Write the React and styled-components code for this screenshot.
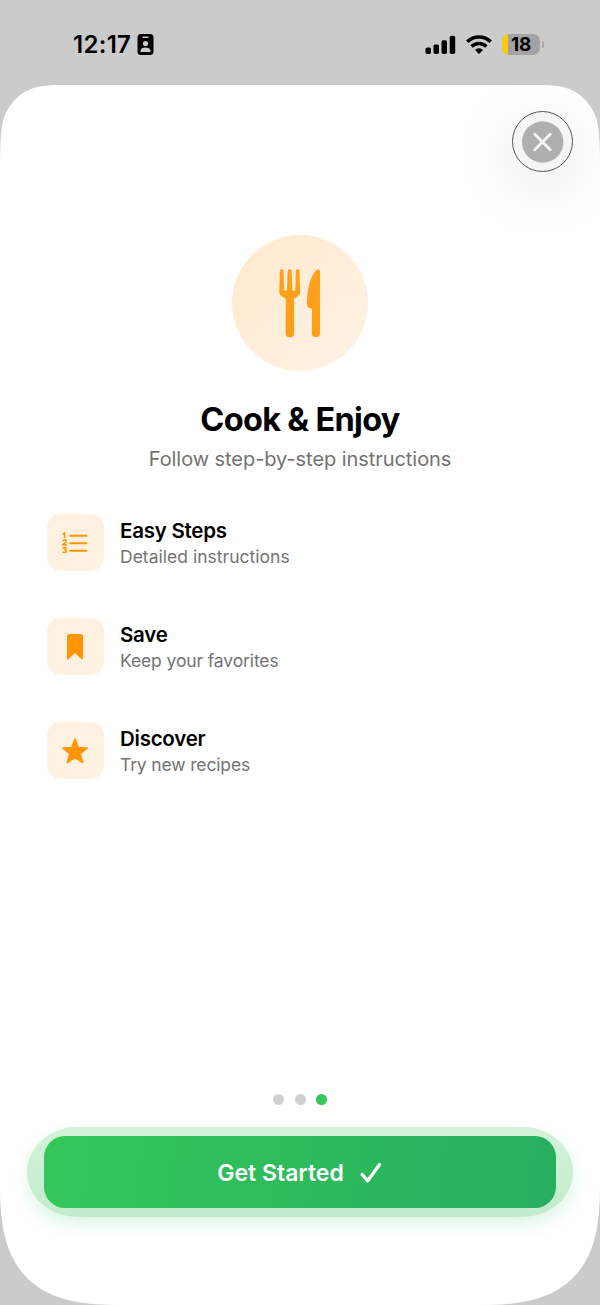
import React from 'react'
import styled, { createGlobalStyle } from 'styled-components'


const GlobalStyle = createGlobalStyle`
  * {
    box-sizing: border-box;
  }

  body {
    margin: 0;
    background-color: #cbcbcb;
    font-family: Inter, 'Liberation Sans', sans-serif;
  }
`

const StyledScreen = styled.div`
  display: flex;
  flex-direction: column;
  width: 600px;
  height: 1305px;
  overflow: hidden;
  background-color: #cbcbcb;
`

const StyledStatusBar = styled.header`
  display: flex;
  justify-content: space-between;
  height: 85px;
  padding: 31px 56px 0 73px;
`

const StyledStatusGroup = styled.div`
  display: flex;
  align-items: center;
  gap: ${(props) => props.$gap || '0'};
  height: 27px;
`

const StyledTime = styled.span`
  width: 64px;
  font-size: 24px;
  font-weight: 600;
  letter-spacing: 0.3px;
  white-space: nowrap;
`

const StyledBattery = styled.div`
  display: flex;
  align-items: center;
  justify-content: center;
  width: 38px;
  height: 21px;
  border-radius: 7px;
  background: linear-gradient(to right, #fbcb09 6.5px, #a3a3a3 6.5px);
  font-size: 19px;
  font-weight: 700;
  letter-spacing: -0.2px;
`

const StyledBatteryCap = styled.div`
  width: 2px;
  height: 7px;
  margin-left: -8px;
  border-radius: 0 3px 3px 0;
  background-color: #a9a9a9;
`

/* continuous corners, they run out further than a plain radius */
const StyledSheet = styled.main`
  display: flex;
  flex-direction: column;
  height: 1220px;
  overflow: hidden;
  background-color: #fff;
  clip-path: path('M0 80C.3 45 1 31 13 17C26 2 40 0 62 0H538C560 0 574 2 587 17C599 31 599.7 45 600 80V1098C600 1135 597 1168 573 1193C548 1217 515 1220 478 1220H122C85 1220 52 1217 27 1193C3 1168 0 1135 0 1098Z');
`

const StyledTopBar = styled.div`
  display: flex;
  justify-content: flex-end;
  height: 150px;
  padding: 26px 27px 0 0;
`

const StyledCloseButton = styled.button`
  display: flex;
  align-items: center;
  justify-content: center;
  width: 61px;
  height: 61px;
  padding: 0;
  border: 1px solid #555;
  border-radius: 50%;
  background-color: #f5f5f5;
  box-shadow: 0 14px 64px 4px rgba(0, 0, 0, 0.09);
`

const StyledHero = styled.div`
  display: flex;
  align-items: center;
  justify-content: center;
  width: 136px;
  height: 136px;
  margin: 0 auto;
  border-radius: 50%;
  background: linear-gradient(135deg, #ffe9ce, #fff2e4);
`

const StyledTitle = styled.h1`
  margin: 29px 0 0;
  font-size: 32.5px;
  font-weight: 700;
  line-height: 40px;
  letter-spacing: -0.7px;
  text-align: center;
`

const StyledSubtitle = styled.p`
  margin: 6px 0 0;
  color: #737373;
  font-size: 20px;
  line-height: 26px;
  letter-spacing: -0.06px;
  text-align: center;
`

const StyledFeatureList = styled.ul`
  display: flex;
  flex-direction: column;
  gap: 47px;
  margin: 42px 0 0;
  padding: 0 47px;
  list-style: none;
`

const StyledFeature = styled.li`
  display: flex;
  align-items: center;
  gap: 16px;
  height: 57px;
`

const StyledFeatureIcon = styled.div`
  display: flex;
  align-items: center;
  justify-content: center;
  width: 57px;
  height: 57px;
  padding-right: 2px;
  border-radius: 14px;
  background-color: #fff1e0;
`

const StyledFeatureBody = styled.div`
  padding-top: 2px;
`

const StyledFeatureTitle = styled.div`
  font-size: 20.5px;
  font-weight: 600;
  line-height: 26px;
  letter-spacing: -0.25px;
`

const StyledFeatureText = styled.div`
  color: #737373;
  font-size: 17.5px;
  line-height: 25px;
  letter-spacing: ${(props) => props.$spacing || '0'};
`

const StyledFooter = styled.footer`
  display: flex;
  flex-direction: column;
  align-items: center;
  margin-top: auto;
  padding-bottom: 88px;
`

const StyledDots = styled.div`
  display: flex;
  gap: 10.8px;
  margin-bottom: 22px;
`

const StyledDot = styled.span`
  width: 11px;
  height: 11px;
  border-radius: 50%;
  background-color: ${(props) => (props.$active ? '#34c759' : '#d1d1d1')};
`

const StyledButtonHalo = styled.div`
  width: 546px;
  height: 90px;
  padding: 9px 17px;
  border-radius: 50px / 45px;
  background: linear-gradient(#d3f2da, #c2ebcd);
  box-shadow: 0 8px 17px rgba(52, 199, 89, 0.16);
`

const StyledButton = styled.button`
  display: flex;
  align-items: center;
  justify-content: center;
  gap: 16px;
  width: 512px;
  height: 72px;
  padding: 1px 1px 0 0;
  border: 0;
  border-radius: 21px;
  background: linear-gradient(98deg, #34c759, #27ae60);
  color: #fff;
  font-family: inherit;
  font-size: 23px;
  font-weight: 600;
`


const BadgeIcon = () => (
  <svg width='17' height='21' viewBox='0 0 17 21'>
    <rect x='0.5' y='0' width='16' height='21' rx='3.5' fill='#000' />
    <rect x='5.3' y='2.4' width='6.4' height='1.6' rx='0.8' fill='#cbcbcb' />
    <circle cx='8.5' cy='9.6' r='2.6' fill='#cbcbcb' />
    <path d='M3.5 18v-1.2c0-2.2 2.2-3.4 5-3.4s5 1.2 5 3.4V18Z' fill='#cbcbcb' />
  </svg>
)

const SignalIcon = () => (
  <svg width='31' height='20' viewBox='0 0 31 20'>
    <rect x='0.5' y='12.5' width='5.5' height='6.5' rx='1.7' />
    <rect x='8.5' y='9.5' width='5.5' height='9.5' rx='1.7' />
    <rect x='16.5' y='5.3' width='5.5' height='13.7' rx='1.7' />
    <rect x='24.7' y='0.8' width='5.5' height='18.2' rx='1.7' />
  </svg>
)

const WifiIcon = () => (
  <svg width='26' height='20' viewBox='0 0 26 20' fill='none' stroke='#000' strokeWidth='3.5'>
    <path d='M1.3 6.7a16.6 16.6 0 0 1 23.4 0' />
    <path d='M5.5 11.5a10.6 10.6 0 0 1 15 0' />
    <path d='M13 19l-4-4.1a5.7 5.7 0 0 1 8 0Z' fill='#000' stroke='none' />
  </svg>
)

const CloseIcon = () => (
  <svg width='42' height='42' viewBox='0 0 42 42'>
    <circle cx='20.7' cy='21' r='20.7' fill='#afafb0' />
    <path d='M12.8 13.3l15.4 15.4M28.2 13.3l-15.4 15.4' stroke='#f6f6f6' strokeWidth='2.8' strokeLinecap='round' />
  </svg>
)

const ForkKnifeIcon = () => (
  <svg width='42' height='70' viewBox='0 0 42 70' fill='#ff9f1a'>
    <path d='M.9 3Q1 1.3 2.7 1.3T4.500 3L5 21.500Q5.100 22.900 6.500 22.900T8 21.500L8.700 3Q8.800 1.300 10.700 1.300T12.600 3L13.300 21.500Q13.400 22.900 14.900 22.900T16.300 21.500L16.800 3Q17 1.300 18.700 1.300T20.500 3L21.200 23.200C21.300 26.500 19.500 28.600 16.400 29.800Q14.900 30.400 14.900 32L15.100 65.200Q15.100 69.300 10.800 69.300T6.600 65.200L6.800 32Q6.800 30.400 5.300 29.800C2.200 28.600.2 26.500.3 23.200Z' />
    <path d='M38.500 1.500Q41 .8 41 3.500V65.200Q41 69.300 36.900 69.300T32.800 65.200L33 42Q33 40.300 31.400 40.100C29.300 39.800 28 38.700 28 36.400C28 21.500 32 5.500 38.500 1.500Z' />
  </svg>
)

const ListIcon = () => (
  <svg width='26' height='23' viewBox='0 0 26 23' fill='none' stroke='#ff9500' strokeLinecap='round'>
    <path d='M8.2 4.7h16.2M8.2 12.2h16.2M8.2 19.700h16.2' strokeWidth='2' />
    <path d='M1.100 3l1.500-.9v4.600M1 9.900q.5-.8 1.800-.8c2.100 0 2 1.600.6 2.500L1 13.700h3.300M1 17q2.900-1.300 3 .4 0 1.100-1.700 1.200 2 .1 2 1.500-.1 2-3.400 1' strokeWidth='1.500' />
  </svg>
)

const BookmarkIcon = () => (
  <svg width='18' height='28' viewBox='0 0 18 28'>
    <path d='M4.2 1h9.600Q17 1 17 4.200V25.400Q17 27.300 15.500 26L9 20.200 2.500 26Q1 27.300 1 25.400V4.200Q1 1 4.200 1Z' fill='#ff9500' />
  </svg>
)

const StarIcon = () => (
  <svg width='28' height='28' viewBox='0 0 28 28'>
    <path d='M14 2l3.200 8.500 9 .4-7 5.700 2.500 9L14 20.500l-7.700 5.100 2.500-9-7-5.700 9-.4Z' fill='#ff9500' stroke='#ff9500' strokeWidth='1.500' strokeLinejoin='round' />
  </svg>
)

const CheckIcon = () => (
  <svg width='22' height='22' viewBox='0 0 22 22' fill='none'>
    <path d='M2.200 12.500l5.500 6.300L19.400 2.700' stroke='#fff' strokeWidth='3.300' strokeLinecap='round' strokeLinejoin='round' />
  </svg>
)


const features = [
  { title: 'Easy Steps', text: 'Detailed instructions', Icon: ListIcon, spacing: '0.02px' },
  { title: 'Save', text: 'Keep your favorites', Icon: BookmarkIcon, spacing: '-0.12px' },
  { title: 'Discover', text: 'Try new recipes', Icon: StarIcon, spacing: '-0.15px' },
]

const Feature = (props) => {
  const { title, text, Icon, spacing } = props

  return (
    <StyledFeature>
      <StyledFeatureIcon><Icon /></StyledFeatureIcon>
      <StyledFeatureBody>
        <StyledFeatureTitle>{title}</StyledFeatureTitle>
        <StyledFeatureText $spacing={spacing}>{text}</StyledFeatureText>
      </StyledFeatureBody>
    </StyledFeature>
  )
}

const App = () => {
  return (
    <StyledScreen>
      <GlobalStyle />
      <StyledStatusBar>
        <StyledStatusGroup>
          <StyledTime>12:17</StyledTime>
          <BadgeIcon />
        </StyledStatusGroup>
        <StyledStatusGroup $gap='10px'>
          <SignalIcon />
          <WifiIcon />
          <StyledBattery>18</StyledBattery>
          <StyledBatteryCap />
        </StyledStatusGroup>
      </StyledStatusBar>
      <StyledSheet>
        <StyledTopBar>
          <StyledCloseButton aria-label='Close'><CloseIcon /></StyledCloseButton>
        </StyledTopBar>
        <StyledHero><ForkKnifeIcon /></StyledHero>
        <StyledTitle>Cook &amp; Enjoy</StyledTitle>
        <StyledSubtitle>Follow step-by-step instructions</StyledSubtitle>
        <StyledFeatureList>
          {features.map((feature) => <Feature key={feature.title} {...feature} />)}
        </StyledFeatureList>
        <StyledFooter>
          <StyledDots>
            <StyledDot />
            <StyledDot />
            <StyledDot $active />
          </StyledDots>
          <StyledButtonHalo>
            <StyledButton>Get Started<CheckIcon /></StyledButton>
          </StyledButtonHalo>
        </StyledFooter>
      </StyledSheet>
    </StyledScreen>
  )
}

export default App
